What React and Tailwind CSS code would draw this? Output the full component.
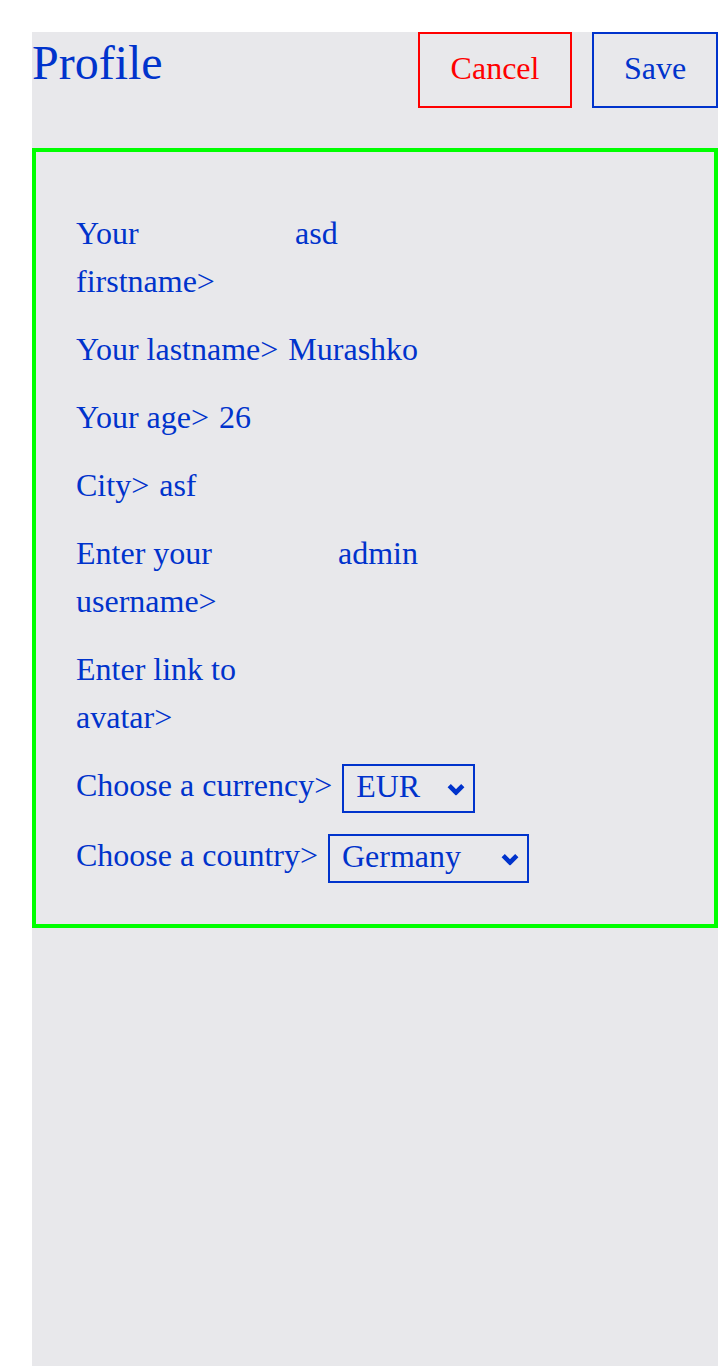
import React from "react";

const BLUE = "text-[#0033cc]";

function TextRow({ label, value, labelClass = "", inputClass = "w-[300px]" }) {
  return (
    <div className="flex items-start gap-[10px]">
      <span className={`leading-[48px] ${labelClass}`}>{label}</span>
      <input
        type="text"
        defaultValue={value}
        className={`h-[48px] leading-[48px] bg-transparent border-0 outline-none p-0 text-[32px] text-[#0033cc] shrink-0 ${inputClass}`}
      />
    </div>
  );
}

function Chevron() {
  return (
    <svg
      width="18"
      height="13"
      viewBox="0 0 18 13"
      className="pointer-events-none absolute right-[8px] top-1/2 -translate-y-1/2"
    >
      <polyline
        points="2.2,3.2 9,10 15.8,3.2"
        fill="none"
        stroke="#0033cc"
        strokeWidth="4.6"
        strokeLinejoin="miter"
      />
    </svg>
  );
}

function SelectRow({ label, value, widthClass }) {
  return (
    <div className="flex items-start gap-[10px] h-[50px]">
      <span className="leading-[48px] whitespace-nowrap">{label}</span>
      <div
        role="combobox"
        className={`relative mt-[3px] h-[49px] box-border border-2 border-[#0033cc] pl-[12px] pr-[30px] leading-[41px] whitespace-nowrap ${widthClass}`}
      >
        {value}
        <Chevron />
      </div>
    </div>
  );
}

export default function App() {
  return (
    <div className="min-h-screen bg-white pl-8 pt-8 font-['Liberation_Serif','Times_New_Roman',serif]">
      <div className={`bg-[#e8e8eb] w-[686px] min-h-[1334px] ${BLUE}`}>
        <div className="flex items-start justify-between">
          <h1 className="text-[48px] leading-[62px] font-normal">Profile</h1>
          <div className="flex items-start gap-5">
            <button className="border-2 border-[#ff0000] text-[#ff0000] text-[32px] leading-[36px] px-[30px] pt-[16px] pb-[20px] w-[154px]">
              Cancel
            </button>
            <button className="border-2 border-[#0033cc] text-[#0033cc] text-[32px] leading-[36px] px-[30px] pt-[16px] pb-[20px] w-[126px]">
              Save
            </button>
          </div>
        </div>

        <form className="mt-10 border-4 border-[#00ff00] pl-10 pr-10 pt-[57px] pb-[43px] text-[32px] flex flex-col gap-5">
          <TextRow
            label="Your firstname>"
            value="asd"
            labelClass="w-[204px] mr-[5px] shrink-0"
            inputClass="w-[360px]"
          />
          <TextRow label="Your lastname>" value="Murashko" />
          <TextRow label="Your age>" value="26" />
          <TextRow label="City>" value="asf" />
          <TextRow
            label="Enter your username>"
            value="admin"
            labelClass="w-[252px] shrink-0"
            inputClass="w-[320px]"
          />
          <TextRow
            label="Enter link to avatar>"
            value=""
            labelClass="w-[204px] mr-[5px] shrink-0"
            inputClass="w-[360px]"
          />
          <SelectRow label="Choose a currency>" value="EUR" widthClass="w-[133px]" />
          <SelectRow label="Choose a country>" value="Germany" widthClass="w-[201px]" />
        </form>
      </div>
    </div>
  );
}
